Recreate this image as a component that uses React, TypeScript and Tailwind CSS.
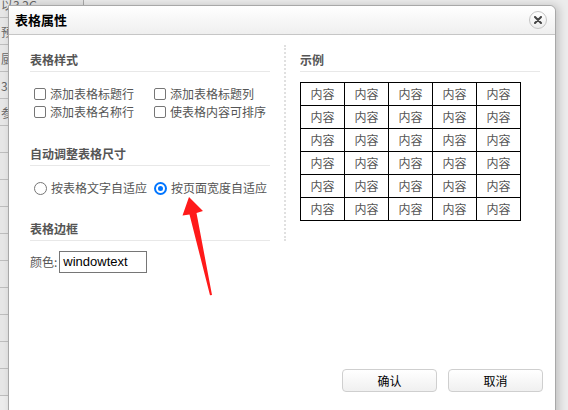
import React from "react";

const font = { fontFamily: '"Microsoft YaHei", "Noto Sans CJK SC", "Noto Sans", sans-serif' };

const bgRows = ["以3 2G", "预", "厨", "3Δ", "参", "", "", "", "", "", "", "", "", "", ""];

const SectionTitle = ({ children }: { children: React.ReactNode }) => (
  <div className="text-[12px] leading-[18px] font-bold text-[#555] pb-[2px] border-b border-[#e8e8e8]">
    {children}
  </div>
);

const Check = ({ label }: { label: string }) => (
  <label className="flex items-center gap-[4px] h-[18px]">
    <span className="w-[12px] h-[12px] rounded-[2px] border border-[#767676] bg-white" />
    <span className="text-[12px] text-[#555]">{label}</span>
  </label>
);

const Radio = ({ label, checked }: { label: string; checked?: boolean }) => (
  <label className="flex items-center gap-[4px] h-[18px]">
    {checked ? (
      <span className="w-[13px] h-[13px] rounded-full bg-[#0075ff] flex items-center justify-center">
        <span className="w-[9px] h-[9px] rounded-full border-[2px] border-white bg-[#0075ff]" />
      </span>
    ) : (
      <span className="w-[13px] h-[13px] rounded-full border border-[#767676] bg-white" />
    )}
    <span className="text-[12px] text-[#555]">{label}</span>
  </label>
);

const Arrow = () => (
  <svg className="absolute left-0 top-0 pointer-events-none" width="568" height="410">
    <polygon
      points="189,197 203,211 196.5,213 212,295 210,295.3 189.5,214.5 182.5,215.5"
      fill="#ff1a1a"
    />
  </svg>
);

export default function App() {
  return (
    <div className="relative w-[568px] h-[410px] overflow-hidden bg-[#ececec]" style={font}>
      {/* page behind */}
      <div className="flex flex-col w-[84px] -mt-[9px] border-r border-[#aaa] bg-[#e6e6e6]">
        {bgRows.map((t, i) => (
          <div key={i} className="h-[27px] shrink-0 border-b border-[#bdbdbd] text-[12px] text-[#666] leading-[27px] pl-[1px] whitespace-nowrap">
            {t}
          </div>
        ))}
      </div>

      {/* dialog */}
      <div className="absolute left-[8px] top-[5px] w-[548px] h-[420px] bg-white border border-[#a8a8a8] rounded-tr-[6px] shadow-[3px_0_8px_rgba(0,0,0,0.18)] flex flex-col">
        <div className="h-[29px] shrink-0 flex items-center justify-between pl-[6px] pr-[8px] bg-gradient-to-b from-white to-[#efefef] border-b border-[#c6c6c6] rounded-tr-[6px]">
          <span className="text-[13px] font-bold text-black">表格属性</span>
          <button className="w-[18px] h-[18px] rounded-full border border-[#c4c4c4] bg-gradient-to-b from-white to-[#ededed] flex items-center justify-center">
            <svg width="8" height="8" viewBox="0 0 8 8">
              <path d="M1 1 L7 7 M7 1 L1 7" stroke="#444" strokeWidth="2" strokeLinecap="round" />
            </svg>
          </button>
        </div>

        <div className="flex pt-[16px]">
          {/* left */}
          <div className="w-[240px] ml-[21px] flex flex-col">
            <SectionTitle>表格样式</SectionTitle>
            <div className="grid grid-cols-[120px_120px] mt-[13px] pl-[4px]">
              <Check label="添加表格标题行" />
              <Check label="添加表格标题列" />
              <Check label="添加表格名称行" />
              <Check label="使表格内容可排序" />
            </div>
            <div className="mt-[24px]">
              <SectionTitle>自动调整表格尺寸</SectionTitle>
            </div>
            <div className="flex gap-[7px] mt-[13px] pl-[4px]">
              <Radio label="按表格文字自适应" />
              <Radio label="按页面宽度自适应" checked />
            </div>
            <div className="mt-[23px]">
              <SectionTitle>表格边框</SectionTitle>
            </div>
            <div className="flex items-center mt-[10px]">
              <span className="text-[12px] text-[#555]">颜色:</span>
              <div className="ml-[2px] w-[88px] h-[22px] border border-[#767676] px-[3px] text-[13px] leading-[20px] text-black" style={{ fontFamily: '"Liberation Sans", Arial, sans-serif' }}>
                windowtext
              </div>
            </div>
          </div>

          {/* divider */}
          <div className="ml-[14px] -mt-[6px] w-0 h-[196px] border-l-[2px] border-dotted border-[#e0e0e0]" />

          {/* right */}
          <div className="ml-[14px] w-[240px] flex flex-col">
            <SectionTitle>示例</SectionTitle>
            <table className="mt-[10px] w-[221px] border-collapse">
              <tbody>
                {Array.from({ length: 6 }).map((_, r) => (
                  <tr key={r}>
                    {Array.from({ length: 5 }).map((_, c) => (
                      <td key={c} className="border border-black h-[23px] text-center text-[12px] text-[#555] p-0">
                        内容
                      </td>
                    ))}
                  </tr>
                ))}
              </tbody>
            </table>
          </div>
        </div>

        <div className="mt-auto mb-[32px] flex justify-end gap-[11px] pr-[12px]">
          <button className="w-[95px] h-[23px] rounded-[4px] border border-[#cfcfcf] bg-gradient-to-b from-white to-[#f0f0f0] text-[12px] text-black">
            确认
          </button>
          <button className="w-[95px] h-[23px] rounded-[4px] border border-[#cfcfcf] bg-gradient-to-b from-white to-[#f0f0f0] text-[12px] text-black">
            取消
          </button>
        </div>
      </div>

      <Arrow />
    </div>
  );
}
